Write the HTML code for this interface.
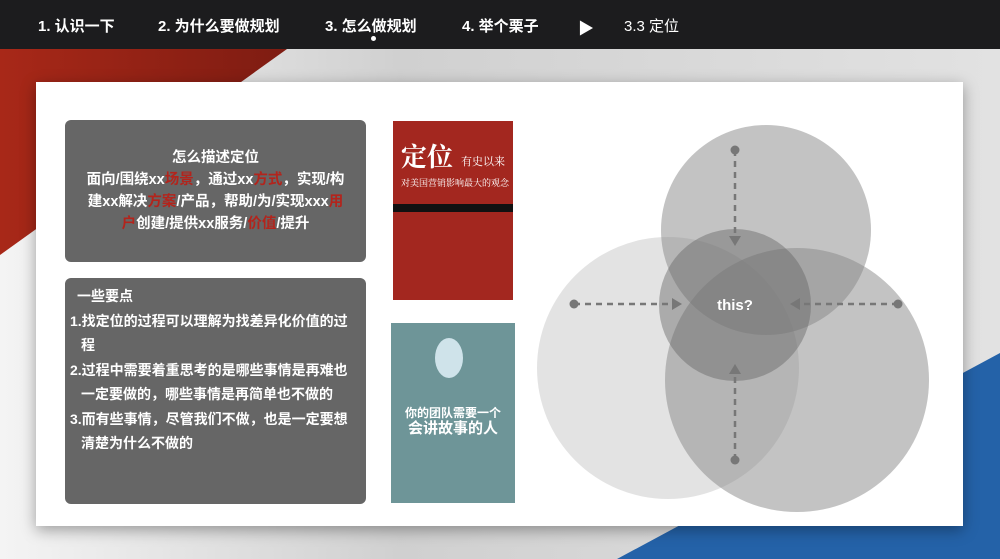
<!DOCTYPE html>
<html><head><meta charset="utf-8"><style>
body{margin:0;width:1000px;height:559px;overflow:hidden;position:relative;font-family:"Liberation Sans","Noto Sans CJK SC",sans-serif;background:linear-gradient(90deg,#f4f4f4,#d0d0d0 40%,#e2e2e2);}
.top{position:absolute;left:0;top:0;width:1000px;height:49px;background:#1c1c1e;color:#fff;font-size:15px;font-weight:bold;}
.top span{position:absolute;top:15px;}
.slide{position:absolute;left:36px;top:82px;width:927px;height:444px;background:#fff;box-shadow:0 4px 14px rgba(0,0,0,.35);}
.box{position:absolute;left:29px;width:301px;background:#666;border-radius:6px;color:#fff;font-weight:bold;font-size:14px;white-space:nowrap}
.r{color:#b3241c}
</style></head><body>
<svg width="1000" height="559" style="position:absolute;left:0;top:0">
<defs><linearGradient id="rg" x1="0" y1="0" x2="1" y2="0"><stop offset="0" stop-color="#a82818"/><stop offset="1" stop-color="#7e1c12"/></linearGradient></defs>
<polygon points="0,49 287,49 0,255" fill="url(#rg)"/>
<polygon points="617,559 1000,559 1000,353" fill="#2462a8"/>
</svg>
<div class="top">
<span style="left:38px">1. 认识一下</span>
<span style="left:158px">2. 为什么要做规划</span>
<span style="left:325px">3. 怎么做规划</span>
<span style="left:462px">4. 举个栗子</span>
<span style="left:578px;font-size:16px">▶</span>
<span style="left:624px;font-weight:normal">3.3 定位</span>
<div style="position:absolute;left:371px;top:36px;width:5px;height:5px;border-radius:50%;background:#fff"></div>
</div>
<div class="slide">
<div class="box" style="top:38px;height:142px;text-align:center;line-height:22px;padding-top:27px;box-sizing:border-box;font-size:14.5px">怎么描述定位<br>面向/围绕xx<span class="r">场景</span>，通过xx<span class="r">方式</span>，实现/构<br>建xx解决<span class="r">方案</span>/产品，帮助/为/实现xxx<span class="r">用</span><br><span class="r">户</span>创建/提供xx服务/<span class="r">价值</span>/提升</div>
<div class="box" style="top:196px;height:226px;line-height:24.5px;padding:6px 4px 0 5px;box-sizing:border-box">
<div style="padding-left:7px">一些要点</div>
<div>1.找定位的过程可以理解为找差异化价值的过</div><div style="padding-left:11px">程</div>
<div>2.过程中需要着重思考的是哪些事情是再难也</div><div style="padding-left:11px">一定要做的，哪些事情是再简单也不做的</div>
<div>3.而有些事情，尽管我们不做，也是一定要想</div><div style="padding-left:11px">清楚为什么不做的</div>
</div>
<div style="position:absolute;left:357px;top:39px;width:120px;height:179px;background:#a3271f;color:#fff;font-family:'Noto Serif CJK SC',serif;white-space:nowrap">
<div style="position:absolute;left:8px;top:20px;font-size:26px;font-weight:bold;line-height:30px">定位</div>
<div style="position:absolute;left:68px;top:32px;font-size:11px">有史以来</div>
<div style="position:absolute;left:8px;top:55px;font-size:9px">对美国营销影响最大的观念</div>
<div style="position:absolute;left:0;top:83px;width:120px;height:8px;background:#111"></div>
</div>
<div style="position:absolute;left:355px;top:241px;width:124px;height:180px;background:#6e9598;color:#fff;text-align:center">
<div style="position:absolute;left:44px;top:15px;width:28px;height:40px;border-radius:50%;background:#cfe3ea"></div>
<div style="position:absolute;left:0;width:124px;top:82px;font-size:12px;font-weight:bold;line-height:16px">你的团队需要一个<br><span style="font-size:15px">会讲故事的人</span></div>
</div>
</div>
<svg width="1000" height="559" style="position:absolute;left:0;top:0">
<circle cx="668" cy="368" r="131" fill="#999" fill-opacity=".27"/>
<circle cx="766" cy="230" r="105" fill="#888" fill-opacity=".5"/>
<circle cx="797" cy="380" r="132" fill="#888" fill-opacity=".5"/>
<circle cx="735" cy="305" r="76" fill="#666" fill-opacity=".45"/>
<g stroke="#777" stroke-width="2.5" stroke-dasharray="6,5" fill="none">
<line x1="735" y1="150" x2="735" y2="240"/><line x1="735" y1="460" x2="735" y2="370"/>
<line x1="574" y1="304" x2="675" y2="304"/><line x1="898" y1="304" x2="797" y2="304"/>
</g>
<g fill="#777"><circle cx="735" cy="150" r="4.5"/><circle cx="735" cy="460" r="4.5"/><circle cx="574" cy="304" r="4.5"/><circle cx="898" cy="304" r="4.5"/>
<polygon points="729,236 741,236 735,246"/><polygon points="729,374 741,374 735,364"/><polygon points="672,298 672,310 682,304"/><polygon points="800,298 800,310 790,304"/></g>
<text x="735" y="310" text-anchor="middle" fill="#fff" font-size="15" font-weight="bold" font-family="Liberation Sans">this?</text>
</svg>
</body></html>
